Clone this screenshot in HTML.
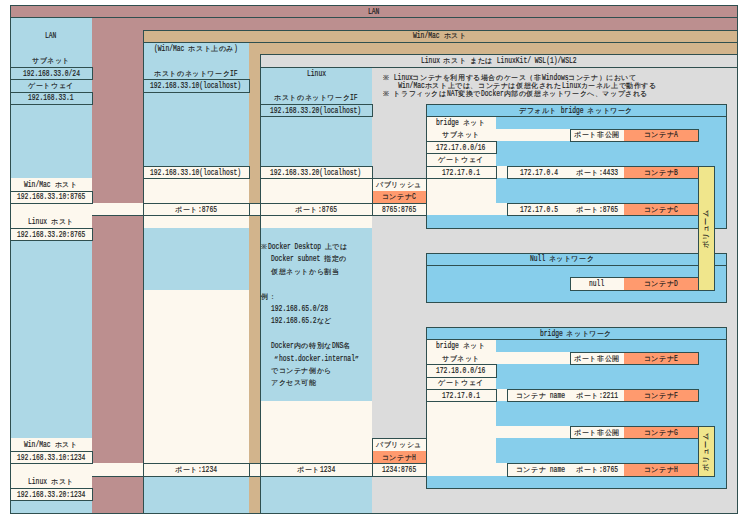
<!DOCTYPE html>
<html><head><meta charset="utf-8"><title>Docker network</title>
<style>
@font-face{font-family:"LMJ";src:local("Liberation Mono");size-adjust:166.7%;unicode-range:U+203B,U+3000-FFFF;}
html,body{margin:0;padding:0;background:#fff;}
body{width:747px;height:516px;position:relative;overflow:hidden;
 font-family:"Liberation Mono",monospace;font-size:8.60px;color:#1c1c1c;}
.f,.l,.t{position:absolute;}
.l{background:#2f4f4f;}
.t{white-space:nowrap;overflow:visible;}
.t>div{position:absolute;left:0;right:0;top:0;bottom:0;display:flex;align-items:center;}
.a{display:inline-block;white-space:nowrap;height:9px;line-height:9px;vertical-align:top;}
.a>span{display:inline-block;transform:scaleX(0.7364);transform-origin:0 50%;-webkit-text-stroke:0.2px #1c1c1c;}
.j{display:inline-block;font-family:"LMJ","Liberation Mono",monospace;-webkit-text-stroke:0.15px #1c1c1c;font-size:7.00px;letter-spacing:0.6px;height:9px;line-height:9px;vertical-align:top;}
.note{position:absolute;white-space:nowrap;}
.vol{position:absolute;white-space:nowrap;transform:rotate(-90deg);}
</style></head><body>

<div class="f" style="left:10px;top:5px;width:727px;height:508px;background:#bc8f8f"></div>
<div class="f" style="left:10px;top:17px;width:82px;height:496px;background:#add8e6"></div>
<div class="f" style="left:10px;top:178px;width:82px;height:62px;background:#fdf8ee"></div>
<div class="f" style="left:10px;top:438px;width:82px;height:62px;background:#fdf8ee"></div>
<div class="f" style="left:92px;top:203px;width:51px;height:12px;background:#fdf8ee"></div>
<div class="f" style="left:92px;top:463px;width:51px;height:13px;background:#fdf8ee"></div>
<div class="f" style="left:143px;top:30px;width:594px;height:483px;background:#d2b48c"></div>
<div class="f" style="left:143px;top:42px;width:106px;height:471px;background:#add8e6"></div>
<div class="f" style="left:143px;top:166px;width:106px;height:62px;background:#fdf8ee"></div>
<div class="f" style="left:143px;top:290px;width:106px;height:186px;background:#fdf8ee"></div>
<div class="f" style="left:249px;top:203px;width:11px;height:12px;background:#fdf8ee"></div>
<div class="f" style="left:249px;top:463px;width:11px;height:13px;background:#fdf8ee"></div>
<div class="f" style="left:260px;top:54px;width:477px;height:459px;background:#dcdcdc"></div>
<div class="f" style="left:260px;top:67px;width:112px;height:446px;background:#add8e6"></div>
<div class="f" style="left:260px;top:166px;width:112px;height:62px;background:#fdf8ee"></div>
<div class="f" style="left:260px;top:401px;width:112px;height:75px;background:#fdf8ee"></div>
<div class="f" style="left:372px;top:178px;width:54px;height:37px;background:#fdf8ee"></div>
<div class="f" style="left:372px;top:191px;width:54px;height:12px;background:#ff9a6e"></div>
<div class="f" style="left:372px;top:438px;width:54px;height:38px;background:#fdf8ee"></div>
<div class="f" style="left:372px;top:451px;width:54px;height:12px;background:#ff9a6e"></div>
<div class="f" style="left:426px;top:104px;width:300px;height:124px;background:#87ceeb"></div>
<div class="f" style="left:426px;top:116px;width:70px;height:99px;background:#fdf8ee"></div>
<div class="f" style="left:426px;top:129px;width:144px;height:12px;background:#fdf8ee"></div>
<div class="f" style="left:496px;top:166px;width:11px;height:12px;background:#fdf8ee"></div>
<div class="f" style="left:426px;top:203px;width:81px;height:12px;background:#fdf8ee"></div>
<div class="f" style="left:507px;top:166px;width:117px;height:12px;background:#fdf8ee"></div>
<div class="f" style="left:507px;top:203px;width:117px;height:12px;background:#fdf8ee"></div>
<div class="f" style="left:570px;top:129px;width:54px;height:12px;background:#fdf8ee"></div>
<div class="f" style="left:624px;top:129px;width:74px;height:12px;background:#ff9a6e"></div>
<div class="f" style="left:624px;top:166px;width:74px;height:12px;background:#ff9a6e"></div>
<div class="f" style="left:624px;top:203px;width:74px;height:12px;background:#ff9a6e"></div>
<div class="f" style="left:426px;top:253px;width:300px;height:49px;background:#87ceeb"></div>
<div class="f" style="left:570px;top:277px;width:54px;height:13px;background:#fdf8ee"></div>
<div class="f" style="left:624px;top:277px;width:74px;height:13px;background:#ff9a6e"></div>
<div class="f" style="left:426px;top:327px;width:300px;height:161px;background:#87ceeb"></div>
<div class="f" style="left:426px;top:339px;width:70px;height:137px;background:#fdf8ee"></div>
<div class="f" style="left:426px;top:352px;width:144px;height:12px;background:#fdf8ee"></div>
<div class="f" style="left:496px;top:389px;width:11px;height:12px;background:#fdf8ee"></div>
<div class="f" style="left:426px;top:426px;width:144px;height:12px;background:#fdf8ee"></div>
<div class="f" style="left:426px;top:463px;width:81px;height:13px;background:#fdf8ee"></div>
<div class="f" style="left:507px;top:389px;width:117px;height:12px;background:#fdf8ee"></div>
<div class="f" style="left:507px;top:463px;width:117px;height:13px;background:#fdf8ee"></div>
<div class="f" style="left:570px;top:352px;width:54px;height:12px;background:#fdf8ee"></div>
<div class="f" style="left:570px;top:426px;width:54px;height:12px;background:#fdf8ee"></div>
<div class="f" style="left:624px;top:352px;width:74px;height:12px;background:#ff9a6e"></div>
<div class="f" style="left:624px;top:389px;width:74px;height:12px;background:#ff9a6e"></div>
<div class="f" style="left:624px;top:426px;width:74px;height:12px;background:#ff9a6e"></div>
<div class="f" style="left:624px;top:463px;width:74px;height:13px;background:#ff9a6e"></div>
<div class="l" style="left:10px;top:5px;width:728px;height:1px"></div>
<div class="l" style="left:10px;top:513px;width:728px;height:1px"></div>
<div class="l" style="left:10px;top:5px;width:1px;height:509px"></div>
<div class="l" style="left:737px;top:5px;width:1px;height:509px"></div>
<div class="l" style="left:10px;top:17px;width:728px;height:1px"></div>
<div class="l" style="left:143px;top:30px;width:595px;height:1px"></div>
<div class="l" style="left:143px;top:513px;width:595px;height:1px"></div>
<div class="l" style="left:143px;top:30px;width:1px;height:484px"></div>
<div class="l" style="left:737px;top:30px;width:1px;height:484px"></div>
<div class="l" style="left:143px;top:42px;width:595px;height:1px"></div>
<div class="l" style="left:260px;top:54px;width:478px;height:1px"></div>
<div class="l" style="left:260px;top:513px;width:478px;height:1px"></div>
<div class="l" style="left:260px;top:54px;width:1px;height:460px"></div>
<div class="l" style="left:737px;top:54px;width:1px;height:460px"></div>
<div class="l" style="left:260px;top:67px;width:478px;height:1px"></div>
<div class="l" style="left:10px;top:67px;width:83px;height:1px"></div>
<div class="l" style="left:10px;top:79px;width:83px;height:1px"></div>
<div class="l" style="left:10px;top:67px;width:1px;height:13px"></div>
<div class="l" style="left:92px;top:67px;width:1px;height:13px"></div>
<div class="l" style="left:10px;top:92px;width:83px;height:1px"></div>
<div class="l" style="left:10px;top:104px;width:83px;height:1px"></div>
<div class="l" style="left:10px;top:92px;width:1px;height:13px"></div>
<div class="l" style="left:92px;top:92px;width:1px;height:13px"></div>
<div class="l" style="left:10px;top:191px;width:83px;height:1px"></div>
<div class="l" style="left:10px;top:203px;width:83px;height:1px"></div>
<div class="l" style="left:10px;top:191px;width:1px;height:13px"></div>
<div class="l" style="left:92px;top:191px;width:1px;height:13px"></div>
<div class="l" style="left:10px;top:228px;width:83px;height:1px"></div>
<div class="l" style="left:10px;top:240px;width:83px;height:1px"></div>
<div class="l" style="left:10px;top:228px;width:1px;height:13px"></div>
<div class="l" style="left:92px;top:228px;width:1px;height:13px"></div>
<div class="l" style="left:10px;top:451px;width:83px;height:1px"></div>
<div class="l" style="left:10px;top:463px;width:83px;height:1px"></div>
<div class="l" style="left:10px;top:451px;width:1px;height:13px"></div>
<div class="l" style="left:92px;top:451px;width:1px;height:13px"></div>
<div class="l" style="left:10px;top:488px;width:83px;height:1px"></div>
<div class="l" style="left:10px;top:500px;width:83px;height:1px"></div>
<div class="l" style="left:10px;top:488px;width:1px;height:13px"></div>
<div class="l" style="left:92px;top:488px;width:1px;height:13px"></div>
<div class="l" style="left:92px;top:215px;width:52px;height:1px"></div>
<div class="l" style="left:92px;top:476px;width:52px;height:1px"></div>
<div class="l" style="left:143px;top:79px;width:107px;height:1px"></div>
<div class="l" style="left:143px;top:92px;width:107px;height:1px"></div>
<div class="l" style="left:143px;top:79px;width:1px;height:14px"></div>
<div class="l" style="left:249px;top:79px;width:1px;height:14px"></div>
<div class="l" style="left:143px;top:166px;width:107px;height:1px"></div>
<div class="l" style="left:143px;top:178px;width:107px;height:1px"></div>
<div class="l" style="left:143px;top:166px;width:1px;height:13px"></div>
<div class="l" style="left:249px;top:166px;width:1px;height:13px"></div>
<div class="l" style="left:143px;top:203px;width:107px;height:1px"></div>
<div class="l" style="left:143px;top:215px;width:107px;height:1px"></div>
<div class="l" style="left:143px;top:203px;width:1px;height:13px"></div>
<div class="l" style="left:249px;top:203px;width:1px;height:13px"></div>
<div class="l" style="left:143px;top:463px;width:107px;height:1px"></div>
<div class="l" style="left:143px;top:476px;width:107px;height:1px"></div>
<div class="l" style="left:143px;top:463px;width:1px;height:14px"></div>
<div class="l" style="left:249px;top:463px;width:1px;height:14px"></div>
<div class="l" style="left:249px;top:203px;width:12px;height:1px"></div>
<div class="l" style="left:249px;top:215px;width:12px;height:1px"></div>
<div class="l" style="left:249px;top:203px;width:1px;height:13px"></div>
<div class="l" style="left:260px;top:203px;width:1px;height:13px"></div>
<div class="l" style="left:249px;top:463px;width:12px;height:1px"></div>
<div class="l" style="left:249px;top:476px;width:12px;height:1px"></div>
<div class="l" style="left:249px;top:463px;width:1px;height:14px"></div>
<div class="l" style="left:260px;top:463px;width:1px;height:14px"></div>
<div class="l" style="left:260px;top:104px;width:113px;height:1px"></div>
<div class="l" style="left:260px;top:116px;width:113px;height:1px"></div>
<div class="l" style="left:260px;top:104px;width:1px;height:13px"></div>
<div class="l" style="left:372px;top:104px;width:1px;height:13px"></div>
<div class="l" style="left:260px;top:166px;width:113px;height:1px"></div>
<div class="l" style="left:260px;top:178px;width:113px;height:1px"></div>
<div class="l" style="left:260px;top:166px;width:1px;height:13px"></div>
<div class="l" style="left:372px;top:166px;width:1px;height:13px"></div>
<div class="l" style="left:260px;top:203px;width:113px;height:1px"></div>
<div class="l" style="left:260px;top:215px;width:113px;height:1px"></div>
<div class="l" style="left:260px;top:203px;width:1px;height:13px"></div>
<div class="l" style="left:372px;top:203px;width:1px;height:13px"></div>
<div class="l" style="left:260px;top:463px;width:113px;height:1px"></div>
<div class="l" style="left:260px;top:476px;width:113px;height:1px"></div>
<div class="l" style="left:260px;top:463px;width:1px;height:14px"></div>
<div class="l" style="left:372px;top:463px;width:1px;height:14px"></div>
<div class="l" style="left:372px;top:178px;width:55px;height:1px"></div>
<div class="l" style="left:372px;top:215px;width:55px;height:1px"></div>
<div class="l" style="left:372px;top:178px;width:1px;height:38px"></div>
<div class="l" style="left:426px;top:178px;width:1px;height:38px"></div>
<div class="l" style="left:372px;top:203px;width:55px;height:1px"></div>
<div class="l" style="left:372px;top:438px;width:55px;height:1px"></div>
<div class="l" style="left:372px;top:476px;width:55px;height:1px"></div>
<div class="l" style="left:372px;top:438px;width:1px;height:39px"></div>
<div class="l" style="left:426px;top:438px;width:1px;height:39px"></div>
<div class="l" style="left:372px;top:463px;width:55px;height:1px"></div>
<div class="l" style="left:426px;top:104px;width:301px;height:1px"></div>
<div class="l" style="left:426px;top:228px;width:301px;height:1px"></div>
<div class="l" style="left:426px;top:104px;width:1px;height:125px"></div>
<div class="l" style="left:726px;top:104px;width:1px;height:125px"></div>
<div class="l" style="left:426px;top:116px;width:301px;height:1px"></div>
<div class="l" style="left:426px;top:141px;width:71px;height:1px"></div>
<div class="l" style="left:426px;top:153px;width:71px;height:1px"></div>
<div class="l" style="left:426px;top:141px;width:1px;height:13px"></div>
<div class="l" style="left:496px;top:141px;width:1px;height:13px"></div>
<div class="l" style="left:426px;top:166px;width:71px;height:1px"></div>
<div class="l" style="left:426px;top:178px;width:71px;height:1px"></div>
<div class="l" style="left:426px;top:166px;width:1px;height:13px"></div>
<div class="l" style="left:496px;top:166px;width:1px;height:13px"></div>
<div class="l" style="left:570px;top:129px;width:129px;height:1px"></div>
<div class="l" style="left:570px;top:141px;width:129px;height:1px"></div>
<div class="l" style="left:570px;top:129px;width:1px;height:13px"></div>
<div class="l" style="left:698px;top:129px;width:1px;height:13px"></div>
<div class="l" style="left:507px;top:166px;width:192px;height:1px"></div>
<div class="l" style="left:507px;top:178px;width:192px;height:1px"></div>
<div class="l" style="left:507px;top:166px;width:1px;height:13px"></div>
<div class="l" style="left:698px;top:166px;width:1px;height:13px"></div>
<div class="l" style="left:507px;top:203px;width:192px;height:1px"></div>
<div class="l" style="left:507px;top:215px;width:192px;height:1px"></div>
<div class="l" style="left:507px;top:203px;width:1px;height:13px"></div>
<div class="l" style="left:698px;top:203px;width:1px;height:13px"></div>
<div class="l" style="left:426px;top:253px;width:301px;height:1px"></div>
<div class="l" style="left:426px;top:302px;width:301px;height:1px"></div>
<div class="l" style="left:426px;top:253px;width:1px;height:50px"></div>
<div class="l" style="left:726px;top:253px;width:1px;height:50px"></div>
<div class="l" style="left:426px;top:265px;width:301px;height:1px"></div>
<div class="l" style="left:570px;top:277px;width:129px;height:1px"></div>
<div class="l" style="left:570px;top:290px;width:129px;height:1px"></div>
<div class="l" style="left:570px;top:277px;width:1px;height:14px"></div>
<div class="l" style="left:698px;top:277px;width:1px;height:14px"></div>
<div class="l" style="left:426px;top:327px;width:301px;height:1px"></div>
<div class="l" style="left:426px;top:488px;width:301px;height:1px"></div>
<div class="l" style="left:426px;top:327px;width:1px;height:162px"></div>
<div class="l" style="left:726px;top:327px;width:1px;height:162px"></div>
<div class="l" style="left:426px;top:339px;width:301px;height:1px"></div>
<div class="l" style="left:426px;top:364px;width:71px;height:1px"></div>
<div class="l" style="left:426px;top:377px;width:71px;height:1px"></div>
<div class="l" style="left:426px;top:364px;width:1px;height:14px"></div>
<div class="l" style="left:496px;top:364px;width:1px;height:14px"></div>
<div class="l" style="left:426px;top:389px;width:71px;height:1px"></div>
<div class="l" style="left:426px;top:401px;width:71px;height:1px"></div>
<div class="l" style="left:426px;top:389px;width:1px;height:13px"></div>
<div class="l" style="left:496px;top:389px;width:1px;height:13px"></div>
<div class="l" style="left:570px;top:352px;width:129px;height:1px"></div>
<div class="l" style="left:570px;top:364px;width:129px;height:1px"></div>
<div class="l" style="left:570px;top:352px;width:1px;height:13px"></div>
<div class="l" style="left:698px;top:352px;width:1px;height:13px"></div>
<div class="l" style="left:507px;top:389px;width:192px;height:1px"></div>
<div class="l" style="left:507px;top:401px;width:192px;height:1px"></div>
<div class="l" style="left:507px;top:389px;width:1px;height:13px"></div>
<div class="l" style="left:698px;top:389px;width:1px;height:13px"></div>
<div class="l" style="left:570px;top:426px;width:129px;height:1px"></div>
<div class="l" style="left:570px;top:438px;width:129px;height:1px"></div>
<div class="l" style="left:570px;top:426px;width:1px;height:13px"></div>
<div class="l" style="left:698px;top:426px;width:1px;height:13px"></div>
<div class="l" style="left:507px;top:463px;width:192px;height:1px"></div>
<div class="l" style="left:507px;top:476px;width:192px;height:1px"></div>
<div class="l" style="left:507px;top:463px;width:1px;height:14px"></div>
<div class="l" style="left:698px;top:463px;width:1px;height:14px"></div>
<div class="f" style="left:698px;top:166px;width:16px;height:124px;background:#f0e68c"></div>
<div class="f" style="left:698px;top:426px;width:16px;height:50px;background:#f0e68c"></div>
<div class="l" style="left:698px;top:166px;width:17px;height:1px"></div>
<div class="l" style="left:698px;top:290px;width:17px;height:1px"></div>
<div class="l" style="left:698px;top:166px;width:1px;height:125px"></div>
<div class="l" style="left:714px;top:166px;width:1px;height:125px"></div>
<div class="l" style="left:698px;top:426px;width:17px;height:1px"></div>
<div class="l" style="left:698px;top:476px;width:17px;height:1px"></div>
<div class="l" style="left:698px;top:426px;width:1px;height:51px"></div>
<div class="l" style="left:714px;top:426px;width:1px;height:51px"></div>
<div class="t" style="left:10px;top:5.00px;width:727px;height:9px"><div style="top:2.6px;height:9px;bottom:auto;justify-content:center;padding-left:0px"><span class="a" style="width:11.40px"><span>LAN</span></span></div></div>
<div class="t" style="left:10px;top:29.78px;width:82px;height:9px"><div style="top:2.6px;height:9px;bottom:auto;justify-content:center;padding-left:0px"><span class="a" style="width:11.40px"><span>LAN</span></span></div></div>
<div class="t" style="left:143px;top:29.78px;width:594px;height:9px"><div style="top:2.6px;height:9px;bottom:auto;justify-content:center;padding-left:0px"><span class="a" style="width:30.40px"><span>Win/Mac&nbsp;</span></span><span class="j">ホスト</span></div></div>
<div class="t" style="left:143px;top:42.17px;width:106px;height:9px"><div style="top:2.6px;height:9px;bottom:auto;justify-content:center;padding-left:0px"><span class="a" style="width:34.20px"><span>(Win/Mac&nbsp;</span></span><span class="j">ホスト上のみ</span><span class="a" style="width:3.80px"><span>)</span></span></div></div>
<div class="t" style="left:10px;top:54.56px;width:82px;height:9px"><div style="top:2.6px;height:9px;bottom:auto;justify-content:center;padding-left:0px"><span class="j">サブネット</span></div></div>
<div class="t" style="left:260px;top:54.56px;width:477px;height:9px"><div style="top:2.6px;height:9px;bottom:auto;justify-content:center;padding-left:0px"><span class="a" style="width:22.80px"><span>Linux&nbsp;</span></span><span class="j">ホスト</span><span class="a" style="width:3.80px"><span>&nbsp;</span></span><span class="j">または</span><span class="a" style="width:83.60px"><span>&nbsp;LinuxKit/&nbsp;WSL(1)/WSL2</span></span></div></div>
<div class="t" style="left:10px;top:66.95px;width:82px;height:9px"><div style="top:2.6px;height:9px;bottom:auto;justify-content:center;padding-left:0px"><span class="a" style="width:57.00px"><span>192.168.33.0/24</span></span></div></div>
<div class="t" style="left:143px;top:66.95px;width:106px;height:9px"><div style="top:2.6px;height:9px;bottom:auto;justify-content:center;padding-left:0px"><span class="j">ホストのネットワーク</span><span class="a" style="width:7.60px"><span>IF</span></span></div></div>
<div class="t" style="left:260px;top:66.95px;width:112px;height:9px"><div style="top:2.6px;height:9px;bottom:auto;justify-content:center;padding-left:0px"><span class="a" style="width:19.00px"><span>Linux</span></span></div></div>
<div class="t" style="left:10px;top:79.34px;width:82px;height:9px"><div style="top:2.6px;height:9px;bottom:auto;justify-content:center;padding-left:0px"><span class="j">ゲートウェイ</span></div></div>
<div class="t" style="left:143px;top:79.34px;width:106px;height:9px"><div style="top:2.6px;height:9px;bottom:auto;justify-content:center;padding-left:0px"><span class="a" style="width:91.20px"><span>192.168.33.10(localhost)</span></span></div></div>
<div class="t" style="left:10px;top:91.73px;width:82px;height:9px"><div style="top:2.6px;height:9px;bottom:auto;justify-content:center;padding-left:0px"><span class="a" style="width:45.60px"><span>192.168.33.1</span></span></div></div>
<div class="t" style="left:260px;top:91.73px;width:112px;height:9px"><div style="top:2.6px;height:9px;bottom:auto;justify-content:center;padding-left:0px"><span class="j">ホストのネットワーク</span><span class="a" style="width:7.60px"><span>IF</span></span></div></div>
<div class="t" style="left:260px;top:104.12px;width:112px;height:9px"><div style="top:2.6px;height:9px;bottom:auto;justify-content:center;padding-left:0px"><span class="a" style="width:91.20px"><span>192.168.33.20(localhost)</span></span></div></div>
<div class="t" style="left:426px;top:104.12px;width:300px;height:9px"><div style="top:2.6px;height:9px;bottom:auto;justify-content:center;padding-left:0px"><span class="j">デフォルト</span><span class="a" style="width:30.40px"><span>&nbsp;bridge&nbsp;</span></span><span class="j">ネットワーク</span></div></div>
<div class="t" style="left:426px;top:116.51px;width:70px;height:9px"><div style="top:2.6px;height:9px;bottom:auto;justify-content:center;padding-left:0px"><span class="a" style="width:26.60px"><span>bridge&nbsp;</span></span><span class="j">ネット</span></div></div>
<div class="t" style="left:426px;top:128.90px;width:70px;height:9px"><div style="top:2.6px;height:9px;bottom:auto;justify-content:center;padding-left:0px"><span class="j">サブネット</span></div></div>
<div class="t" style="left:426px;top:141.29px;width:70px;height:9px"><div style="top:2.6px;height:9px;bottom:auto;justify-content:center;padding-left:0px"><span class="a" style="width:49.40px"><span>172.17.0.0/16</span></span></div></div>
<div class="t" style="left:426px;top:153.68px;width:70px;height:9px"><div style="top:2.6px;height:9px;bottom:auto;justify-content:center;padding-left:0px"><span class="j">ゲートウェイ</span></div></div>
<div class="t" style="left:426px;top:166.07px;width:70px;height:9px"><div style="top:2.6px;height:9px;bottom:auto;justify-content:center;padding-left:0px"><span class="a" style="width:38.00px"><span>172.17.0.1</span></span></div></div>
<div class="t" style="left:570px;top:128.90px;width:54px;height:9px"><div style="top:2.6px;height:9px;bottom:auto;justify-content:center;padding-left:0px"><span class="j">ポート非公開</span></div></div>
<div class="t" style="left:624px;top:128.90px;width:74px;height:9px"><div style="top:2.6px;height:9px;bottom:auto;justify-content:center;padding-left:0px"><span class="j">コンテナ</span><span class="a" style="width:3.80px"><span>A</span></span></div></div>
<div class="t" style="left:507px;top:166.07px;width:63px;height:9px"><div style="top:2.6px;height:9px;bottom:auto;justify-content:center;padding-left:0px"><span class="a" style="width:38.00px"><span>172.17.0.4</span></span></div></div>
<div class="t" style="left:570px;top:166.07px;width:54px;height:9px"><div style="top:2.6px;height:9px;bottom:auto;justify-content:center;padding-left:0px"><span class="j">ポート</span><span class="a" style="width:19.00px"><span>:4433</span></span></div></div>
<div class="t" style="left:624px;top:166.07px;width:74px;height:9px"><div style="top:2.6px;height:9px;bottom:auto;justify-content:center;padding-left:0px"><span class="j">コンテナ</span><span class="a" style="width:3.80px"><span>B</span></span></div></div>
<div class="t" style="left:507px;top:203.24px;width:63px;height:9px"><div style="top:2.6px;height:9px;bottom:auto;justify-content:center;padding-left:0px"><span class="a" style="width:38.00px"><span>172.17.0.5</span></span></div></div>
<div class="t" style="left:570px;top:203.24px;width:54px;height:9px"><div style="top:2.6px;height:9px;bottom:auto;justify-content:center;padding-left:0px"><span class="j">ポート</span><span class="a" style="width:19.00px"><span>:8765</span></span></div></div>
<div class="t" style="left:624px;top:203.24px;width:74px;height:9px"><div style="top:2.6px;height:9px;bottom:auto;justify-content:center;padding-left:0px"><span class="j">コンテナ</span><span class="a" style="width:3.80px"><span>C</span></span></div></div>
<div class="t" style="left:143px;top:166.07px;width:106px;height:9px"><div style="top:2.6px;height:9px;bottom:auto;justify-content:center;padding-left:0px"><span class="a" style="width:91.20px"><span>192.168.33.10(localhost)</span></span></div></div>
<div class="t" style="left:260px;top:166.07px;width:112px;height:9px"><div style="top:2.6px;height:9px;bottom:auto;justify-content:center;padding-left:0px"><span class="a" style="width:91.20px"><span>192.168.33.20(localhost)</span></span></div></div>
<div class="t" style="left:10px;top:178.46px;width:82px;height:9px"><div style="top:2.6px;height:9px;bottom:auto;justify-content:center;padding-left:0px"><span class="a" style="width:30.40px"><span>Win/Mac&nbsp;</span></span><span class="j">ホスト</span></div></div>
<div class="t" style="left:372px;top:178.46px;width:54px;height:9px"><div style="top:2.6px;height:9px;bottom:auto;justify-content:center;padding-left:0px"><span class="j">パブリッシュ</span></div></div>
<div class="t" style="left:10px;top:190.85px;width:82px;height:9px"><div style="top:2.6px;height:9px;bottom:auto;justify-content:center;padding-left:0px"><span class="a" style="width:68.40px"><span>192.168.33.10:8765</span></span></div></div>
<div class="t" style="left:372px;top:190.85px;width:54px;height:9px"><div style="top:2.6px;height:9px;bottom:auto;justify-content:center;padding-left:0px"><span class="j">コンテナ</span><span class="a" style="width:3.80px"><span>C</span></span></div></div>
<div class="t" style="left:143px;top:203.24px;width:106px;height:9px"><div style="top:2.6px;height:9px;bottom:auto;justify-content:center;padding-left:0px"><span class="j">ポート</span><span class="a" style="width:19.00px"><span>:8765</span></span></div></div>
<div class="t" style="left:260px;top:203.24px;width:112px;height:9px"><div style="top:2.6px;height:9px;bottom:auto;justify-content:center;padding-left:0px"><span class="j">ポート</span><span class="a" style="width:19.00px"><span>:8765</span></span></div></div>
<div class="t" style="left:372px;top:203.24px;width:54px;height:9px"><div style="top:2.6px;height:9px;bottom:auto;justify-content:center;padding-left:0px"><span class="a" style="width:34.20px"><span>8765:8765</span></span></div></div>
<div class="t" style="left:10px;top:215.63px;width:82px;height:9px"><div style="top:2.6px;height:9px;bottom:auto;justify-content:center;padding-left:0px"><span class="a" style="width:22.80px"><span>Linux&nbsp;</span></span><span class="j">ホスト</span></div></div>
<div class="t" style="left:10px;top:228.02px;width:82px;height:9px"><div style="top:2.6px;height:9px;bottom:auto;justify-content:center;padding-left:0px"><span class="a" style="width:68.40px"><span>192.168.33.20:8765</span></span></div></div>
<div class="t" style="left:260px;top:240.41px;width:112px;height:9px"><div style="top:2.6px;height:9px;bottom:auto;justify-content:flex-start;padding-left:1px"><span class="j">※</span><span class="a" style="width:57.00px"><span>Docker&nbsp;Desktop&nbsp;</span></span><span class="j">上では</span></div></div>
<div class="t" style="left:260px;top:252.80px;width:112px;height:9px"><div style="top:2.6px;height:9px;bottom:auto;justify-content:flex-start;padding-left:11px"><span class="a" style="width:53.20px"><span>Docker&nbsp;subnet&nbsp;</span></span><span class="j">指定の</span></div></div>
<div class="t" style="left:260px;top:265.19px;width:112px;height:9px"><div style="top:2.6px;height:9px;bottom:auto;justify-content:flex-start;padding-left:11px"><span class="j">仮想ネットから割当</span></div></div>
<div class="t" style="left:260px;top:289.97px;width:112px;height:9px"><div style="top:2.6px;height:9px;bottom:auto;justify-content:flex-start;padding-left:1px"><span class="j">例：</span></div></div>
<div class="t" style="left:260px;top:302.36px;width:112px;height:9px"><div style="top:2.6px;height:9px;bottom:auto;justify-content:flex-start;padding-left:11px"><span class="a" style="width:57.00px"><span>192.168.65.0/28</span></span></div></div>
<div class="t" style="left:260px;top:314.75px;width:112px;height:9px"><div style="top:2.6px;height:9px;bottom:auto;justify-content:flex-start;padding-left:11px"><span class="a" style="width:45.60px"><span>192.168.65.2</span></span><span class="j">など</span></div></div>
<div class="t" style="left:260px;top:339.53px;width:112px;height:9px"><div style="top:2.6px;height:9px;bottom:auto;justify-content:flex-start;padding-left:11px"><span class="a" style="width:22.80px"><span>Docker</span></span><span class="j">内の特別な</span><span class="a" style="width:11.40px"><span>DNS</span></span><span class="j">名</span></div></div>
<div class="t" style="left:260px;top:351.92px;width:112px;height:9px"><div style="top:2.6px;height:9px;bottom:auto;justify-content:flex-start;padding-left:14px"><span class="j">“</span><span class="a" style="width:76.00px"><span>host.docker.internal</span></span><span class="j">”</span></div></div>
<div class="t" style="left:260px;top:364.31px;width:112px;height:9px"><div style="top:2.6px;height:9px;bottom:auto;justify-content:flex-start;padding-left:11px"><span class="j">でコンテナ側から</span></div></div>
<div class="t" style="left:260px;top:376.70px;width:112px;height:9px"><div style="top:2.6px;height:9px;bottom:auto;justify-content:flex-start;padding-left:11px"><span class="j">アクセス可能</span></div></div>
<div class="t" style="left:426px;top:252.80px;width:272px;height:9px"><div style="top:2.6px;height:9px;bottom:auto;justify-content:center;padding-left:0px"><span class="a" style="width:19.00px"><span>Null&nbsp;</span></span><span class="j">ネットワーク</span></div></div>
<div class="t" style="left:570px;top:277.58px;width:54px;height:9px"><div style="top:2.6px;height:9px;bottom:auto;justify-content:center;padding-left:0px"><span class="a" style="width:15.20px"><span>null</span></span></div></div>
<div class="t" style="left:624px;top:277.58px;width:74px;height:9px"><div style="top:2.6px;height:9px;bottom:auto;justify-content:center;padding-left:0px"><span class="j">コンテナ</span><span class="a" style="width:3.80px"><span>D</span></span></div></div>
<div class="t" style="left:426px;top:327.14px;width:300px;height:9px"><div style="top:2.6px;height:9px;bottom:auto;justify-content:center;padding-left:0px"><span class="a" style="width:26.60px"><span>bridge&nbsp;</span></span><span class="j">ネットワーク</span></div></div>
<div class="t" style="left:426px;top:339.53px;width:70px;height:9px"><div style="top:2.6px;height:9px;bottom:auto;justify-content:center;padding-left:0px"><span class="a" style="width:26.60px"><span>bridge&nbsp;</span></span><span class="j">ネット</span></div></div>
<div class="t" style="left:426px;top:351.92px;width:70px;height:9px"><div style="top:2.6px;height:9px;bottom:auto;justify-content:center;padding-left:0px"><span class="j">サブネット</span></div></div>
<div class="t" style="left:426px;top:364.31px;width:70px;height:9px"><div style="top:2.6px;height:9px;bottom:auto;justify-content:center;padding-left:0px"><span class="a" style="width:49.40px"><span>172.18.0.0/16</span></span></div></div>
<div class="t" style="left:426px;top:376.70px;width:70px;height:9px"><div style="top:2.6px;height:9px;bottom:auto;justify-content:center;padding-left:0px"><span class="j">ゲートウェイ</span></div></div>
<div class="t" style="left:426px;top:389.09px;width:70px;height:9px"><div style="top:2.6px;height:9px;bottom:auto;justify-content:center;padding-left:0px"><span class="a" style="width:38.00px"><span>172.17.0.1</span></span></div></div>
<div class="t" style="left:570px;top:351.92px;width:54px;height:9px"><div style="top:2.6px;height:9px;bottom:auto;justify-content:center;padding-left:0px"><span class="j">ポート非公開</span></div></div>
<div class="t" style="left:624px;top:351.92px;width:74px;height:9px"><div style="top:2.6px;height:9px;bottom:auto;justify-content:center;padding-left:0px"><span class="j">コンテナ</span><span class="a" style="width:3.80px"><span>E</span></span></div></div>
<div class="t" style="left:509px;top:389.09px;width:63px;height:9px"><div style="top:2.6px;height:9px;bottom:auto;justify-content:center;padding-left:0px"><span class="j">コンテナ</span><span class="a" style="width:19.00px"><span>&nbsp;name</span></span></div></div>
<div class="t" style="left:570px;top:389.09px;width:54px;height:9px"><div style="top:2.6px;height:9px;bottom:auto;justify-content:center;padding-left:0px"><span class="j">ポート</span><span class="a" style="width:19.00px"><span>:2211</span></span></div></div>
<div class="t" style="left:624px;top:389.09px;width:74px;height:9px"><div style="top:2.6px;height:9px;bottom:auto;justify-content:center;padding-left:0px"><span class="j">コンテナ</span><span class="a" style="width:3.80px"><span>F</span></span></div></div>
<div class="t" style="left:570px;top:426.26px;width:54px;height:9px"><div style="top:2.6px;height:9px;bottom:auto;justify-content:center;padding-left:0px"><span class="j">ポート非公開</span></div></div>
<div class="t" style="left:624px;top:426.26px;width:74px;height:9px"><div style="top:2.6px;height:9px;bottom:auto;justify-content:center;padding-left:0px"><span class="j">コンテナ</span><span class="a" style="width:3.80px"><span>G</span></span></div></div>
<div class="t" style="left:10px;top:438.65px;width:82px;height:9px"><div style="top:2.6px;height:9px;bottom:auto;justify-content:center;padding-left:0px"><span class="a" style="width:30.40px"><span>Win/Mac&nbsp;</span></span><span class="j">ホスト</span></div></div>
<div class="t" style="left:372px;top:438.65px;width:54px;height:9px"><div style="top:2.6px;height:9px;bottom:auto;justify-content:center;padding-left:0px"><span class="j">パブリッシュ</span></div></div>
<div class="t" style="left:10px;top:451.04px;width:82px;height:9px"><div style="top:2.6px;height:9px;bottom:auto;justify-content:center;padding-left:0px"><span class="a" style="width:68.40px"><span>192.168.33.10:1234</span></span></div></div>
<div class="t" style="left:372px;top:451.04px;width:54px;height:9px"><div style="top:2.6px;height:9px;bottom:auto;justify-content:center;padding-left:0px"><span class="j">コンテナ</span><span class="a" style="width:3.80px"><span>H</span></span></div></div>
<div class="t" style="left:143px;top:463.43px;width:106px;height:9px"><div style="top:2.6px;height:9px;bottom:auto;justify-content:center;padding-left:0px"><span class="j">ポート</span><span class="a" style="width:19.00px"><span>:1234</span></span></div></div>
<div class="t" style="left:260px;top:463.43px;width:112px;height:9px"><div style="top:2.6px;height:9px;bottom:auto;justify-content:center;padding-left:0px"><span class="j">ポート</span><span class="a" style="width:15.20px"><span>1234</span></span></div></div>
<div class="t" style="left:372px;top:463.43px;width:54px;height:9px"><div style="top:2.6px;height:9px;bottom:auto;justify-content:center;padding-left:0px"><span class="a" style="width:34.20px"><span>1234:8765</span></span></div></div>
<div class="t" style="left:509px;top:463.43px;width:63px;height:9px"><div style="top:2.6px;height:9px;bottom:auto;justify-content:center;padding-left:0px"><span class="j">コンテナ</span><span class="a" style="width:19.00px"><span>&nbsp;name</span></span></div></div>
<div class="t" style="left:570px;top:463.43px;width:54px;height:9px"><div style="top:2.6px;height:9px;bottom:auto;justify-content:center;padding-left:0px"><span class="j">ポート</span><span class="a" style="width:19.00px"><span>:8765</span></span></div></div>
<div class="t" style="left:624px;top:463.43px;width:74px;height:9px"><div style="top:2.6px;height:9px;bottom:auto;justify-content:center;padding-left:0px"><span class="j">コンテナ</span><span class="a" style="width:3.80px"><span>H</span></span></div></div>
<div class="t" style="left:10px;top:475.82px;width:82px;height:9px"><div style="top:2.6px;height:9px;bottom:auto;justify-content:center;padding-left:0px"><span class="a" style="width:22.80px"><span>Linux&nbsp;</span></span><span class="j">ホスト</span></div></div>
<div class="t" style="left:10px;top:488.21px;width:82px;height:9px"><div style="top:2.6px;height:9px;bottom:auto;justify-content:center;padding-left:0px"><span class="a" style="width:68.40px"><span>192.168.33.20:1234</span></span></div></div>
<div class="note" style="left:383px;top:73.8px"><span class="j">※</span><span class="a" style="width:22.80px"><span>&nbsp;Linux</span></span><span class="j">コンテナを利用する場合のケース（非</span><span class="a" style="width:26.60px"><span>Windows</span></span><span class="j">コンテナ）において</span></div>
<div class="note" style="left:383px;top:82.1px"><span class="a" style="width:41.80px"><span>&nbsp;&nbsp;&nbsp;&nbsp;Win/Mac</span></span><span class="j">ホスト上では、コンテナは仮想化された</span><span class="a" style="width:19.00px"><span>Linux</span></span><span class="j">カーネル上で動作する</span></div>
<div class="note" style="left:383px;top:90.4px"><span class="j">※</span><span class="a" style="width:3.80px"><span>&nbsp;</span></span><span class="j">トラフィックは</span><span class="a" style="width:11.40px"><span>NAT</span></span><span class="j">変換で</span><span class="a" style="width:22.80px"><span>Docker</span></span><span class="j">内部の仮想ネットワークへ、マップされる</span></div>
<div class="vol" style="left:706.0px;top:228.0px;width:60px;height:9px;margin-left:-30px;margin-top:-4.5px;text-align:center"><span class="j">ボリューム</span></div>
<div class="vol" style="left:706.0px;top:451.0px;width:60px;height:9px;margin-left:-30px;margin-top:-4.5px;text-align:center"><span class="j">ボリューム</span></div>
</body></html>
